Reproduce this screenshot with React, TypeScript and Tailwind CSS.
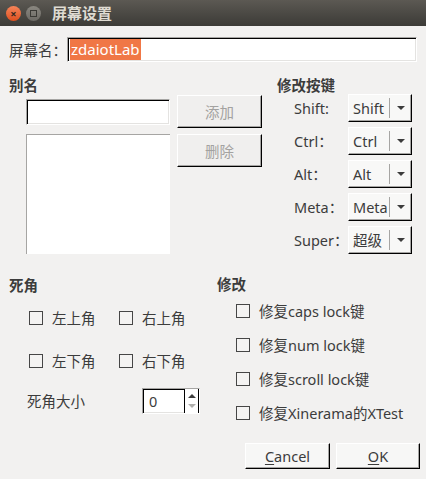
import React from "react";

const sunken =
  "border border-t-[#a6a5a3] border-l-[#a6a5a3] border-b-white border-r-white shadow-[inset_1px_1px_0_#000,inset_-1px_-1px_0_#e4e3e1]";
const raised =
  "border border-t-white border-l-white border-b-black border-r-black shadow-[inset_-1px_-1px_0_#a6a5a3]";

function CheckBox({ label }: { label: string }) {
  return (
    <div className="flex items-center">
      <span className="h-[14px] w-[14px] shrink-0 border border-[#464646] bg-[#f4f3f2]" />
      <span className="ml-[9px] whitespace-nowrap">{label}</span>
    </div>
  );
}

function Combo({ value }: { value: string }) {
  return (
    <div className={`flex h-[28px] w-[64px] items-center bg-[#f8f8f7] ${raised}`}>
      <span className="w-[40px] overflow-hidden pl-[4px] whitespace-nowrap">{value}</span>
      <span className="h-[20px] w-px bg-[#a6a5a3]" />
      <span className="flex flex-1 justify-center">
        <span className="h-0 w-0 border-x-4 border-t-4 border-x-transparent border-t-[#3c3c3c]" />
      </span>
    </div>
  );
}

const modifiers = [
  { label: "Shift:", value: "Shift" },
  { label: "Ctrl：", value: "Ctrl" },
  { label: "Alt：", value: "Alt" },
  { label: "Meta：", value: "Meta" },
  { label: "Super：", value: "超级" }
];

const fixes = ["修复caps lock键", "修复num lock键", "修复scroll lock键", "修复Xinerama的XTest"];

export default function App() {
  return (
    <div className="h-[479px] w-[426px] overflow-hidden bg-[#f2f1f0] font-['Noto_Sans','Noto_Sans_CJK_SC',sans-serif] text-[14.5px] leading-[20px] text-[#3c3c3c]">
      {/* title bar */}
      <div className="flex h-[26px] items-center bg-gradient-to-b from-[#5c5953] to-[#3c3b37] pl-[6px]">
        <span className="flex h-[15px] w-[15px] items-center justify-center rounded-full bg-gradient-to-b from-[#f58458] to-[#df4f1c] text-[11px] leading-none font-bold text-[#3a2a22]">
          ×
        </span>
        <span className="ml-[5px] flex h-[15px] w-[15px] items-center justify-center rounded-full bg-gradient-to-b from-[#8a8780] to-[#6c6a65]">
          <span className="h-[7px] w-[7px] border border-[#3a3935]" />
        </span>
        <span className="ml-[11px] text-[15px] font-bold text-[#dfdbd2]">屏幕设置</span>
      </div>

      <div className="px-[9px] pt-[11px]">
        {/* screen name */}
        <div className="flex h-[25px] items-center">
          <span className="w-[58px] whitespace-nowrap">屏幕名：</span>
          <div className={`flex h-[25px] w-[354px] items-center bg-white pl-[2px] ${sunken}`}>
            <span className="h-[21px] bg-[#f07746] px-[1px] text-[15px] leading-[21px] text-white">zdaiotLab</span>
          </div>
        </div>

        {/* alias + modifier keys */}
        <div className="mt-[14px] flex">
          <div className="w-[268px]">
            <div className="h-[19px] leading-[19px] font-bold">别名</div>
            <div className="ml-[17px] flex">
              <div className="w-[144px]">
                <div className="flex h-[33px] items-center">
                  <div className={`h-[26px] w-full bg-white ${sunken}`} />
                </div>
                <div className="mt-[6px] h-[120px] border-t border-l border-[#a6a5a3] bg-white" />
              </div>
              <div className="ml-[7px] w-[85px]">
                <div className={`flex h-[33px] items-center justify-center bg-[#f0efee] text-[#a3a2a0] ${raised}`}>添加</div>
                <div className={`mt-[6px] flex h-[33px] items-center justify-center bg-[#f0efee] text-[#a3a2a0] ${raised}`}>删除</div>
              </div>
            </div>
          </div>

          <div>
            <div className="h-[18px] leading-[18px] font-bold">修改按键</div>
            <div className="flex flex-col gap-[5px]">
              {modifiers.map((m) => (
                <div key={m.label} className="flex h-[28px] items-center">
                  <span className="w-[71px] pl-[17px] whitespace-nowrap">{m.label}</span>
                  <Combo value={m.value} />
                </div>
              ))}
            </div>
          </div>
        </div>

        {/* dead corners + fixes */}
        <div className="mt-[21px] flex">
          <div className="w-[208px]">
            <div className="h-[20px] font-bold">死角</div>
            <div className="mt-[10px] flex h-[26px] items-center pl-[20px]">
              <div className="w-[90px]">
                <CheckBox label="左上角" />
              </div>
              <CheckBox label="右上角" />
            </div>
            <div className="mt-[17px] flex h-[26px] items-center pl-[20px]">
              <div className="w-[90px]">
                <CheckBox label="左下角" />
              </div>
              <CheckBox label="右下角" />
            </div>
            <div className="mt-[14px] flex h-[26px] items-center pl-[18px]">
              <span className="w-[115px]">死角大小</span>
              <div className={`flex h-[26px] w-[58px] bg-white ${sunken}`}>
                <span className="flex flex-1 items-center pl-[6px]">0</span>
                <div className="flex w-[15px] flex-col items-center justify-center gap-[6px] border-l border-r border-black bg-white">
                  <span className="h-0 w-0 border-x-4 border-b-4 border-x-transparent border-b-[#3c3c3c]" />
                  <span className="h-0 w-0 border-x-4 border-t-4 border-x-transparent border-t-[#b0afad]" />
                </div>
              </div>
            </div>
          </div>

          <div>
            <div className="h-[19px] leading-[19px] font-bold">修改</div>
            {fixes.map((f) => (
              <div key={f} className="flex h-[34px] items-center pl-[19px]">
                <CheckBox label={f} />
              </div>
            ))}
          </div>
        </div>
      </div>

      {/* dialog buttons */}
      <div className="mt-[13px] flex justify-end gap-[6px] pr-[6px]">
        <button className={`h-[26px] w-[85px] bg-[#f7f7f6] ${raised}`}>
          <span className="underline underline-offset-2">C</span>ancel
        </button>
        <button className={`h-[26px] w-[84px] bg-[#f7f7f6] ${raised}`}>
          <span className="underline underline-offset-2">O</span>K
        </button>
      </div>
    </div>
  );
}
